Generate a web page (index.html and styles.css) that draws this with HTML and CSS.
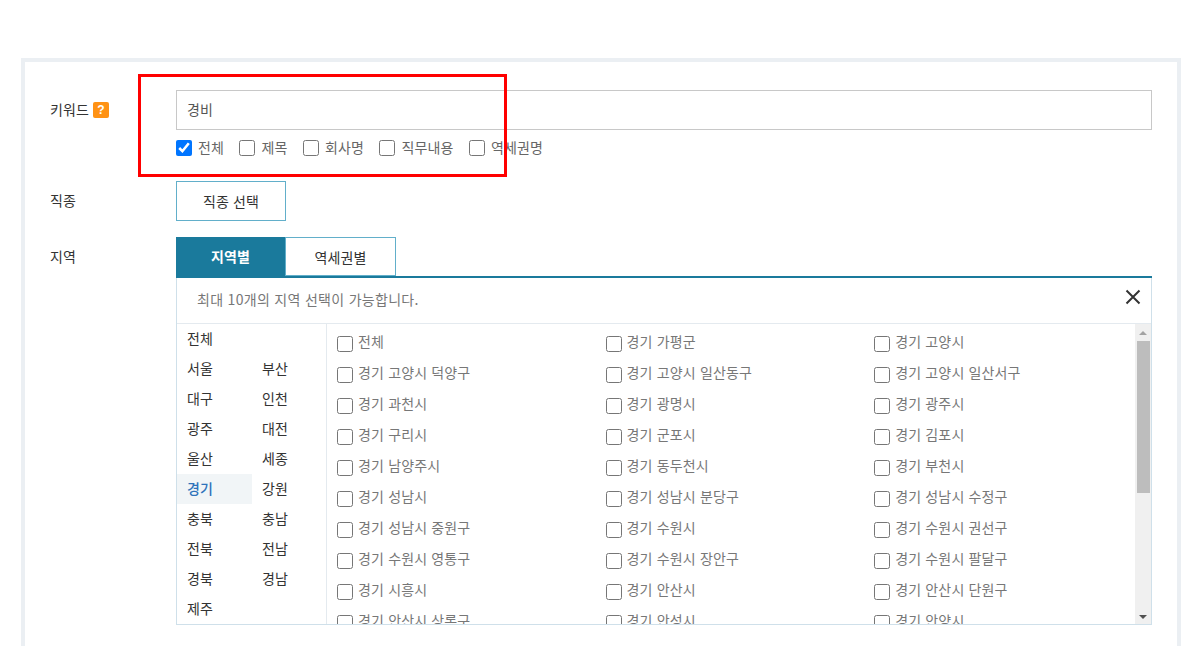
FILE: index.html
```html
<!DOCTYPE html>
<html lang="ko">
<head>
<meta charset="utf-8">
<title>검색</title>
<link rel="stylesheet" href="styles.css">
</head>
<body>
<div class="card">
  <div class="row row-keyword">
    <div class="label">키워드<span class="help">?</span></div>
    <div class="field">
      <div class="text-input">경비</div>
      <div class="checks">
        <label class="check"><input type="checkbox" checked><span>전체</span></label>
        <label class="check"><input type="checkbox"><span>제목</span></label>
        <label class="check"><input type="checkbox"><span>회사명</span></label>
        <label class="check"><input type="checkbox"><span>직무내용</span></label>
        <label class="check"><input type="checkbox"><span>역세권명</span></label>
      </div>
    </div>
  </div>
  <div class="row row-job">
    <div class="label">직종</div>
    <div class="field"><button class="job-btn">직종 선택</button></div>
  </div>
  <div class="row row-area">
    <div class="label">지역</div>
    <div class="field">
      <div class="tabs">
        <div class="tab tab-on">지역별</div>
        <div class="tab">역세권별</div>
      </div>
      <div class="panel">
        <div class="panel-head">
          <span class="notice">최대 10개의 지역 선택이 가능합니다.</span>
          <svg class="close" width="16" height="16" viewBox="0 0 16 16"><path d="M1.5 1.5 14.5 14.5M14.5 1.5 1.5 14.5" stroke="#333" stroke-width="2" fill="none"/></svg>
        </div>
        <div class="panel-body">
          <div class="regions">
            <div class="region">전체</div><div class="region"></div>
            <div class="region">서울</div><div class="region">부산</div>
            <div class="region">대구</div><div class="region">인천</div>
            <div class="region">광주</div><div class="region">대전</div>
            <div class="region">울산</div><div class="region">세종</div>
            <div class="region region-on">경기</div><div class="region">강원</div>
            <div class="region">충북</div><div class="region">충남</div>
            <div class="region">전북</div><div class="region">전남</div>
            <div class="region">경북</div><div class="region">경남</div>
            <div class="region">제주</div><div class="region"></div>
          </div>
          <div class="cities">
            <label class="city"><input type="checkbox"><span>전체</span></label>
            <label class="city"><input type="checkbox"><span>경기 가평군</span></label>
            <label class="city"><input type="checkbox"><span>경기 고양시</span></label>
            <label class="city"><input type="checkbox"><span>경기 고양시 덕양구</span></label>
            <label class="city"><input type="checkbox"><span>경기 고양시 일산동구</span></label>
            <label class="city"><input type="checkbox"><span>경기 고양시 일산서구</span></label>
            <label class="city"><input type="checkbox"><span>경기 과천시</span></label>
            <label class="city"><input type="checkbox"><span>경기 광명시</span></label>
            <label class="city"><input type="checkbox"><span>경기 광주시</span></label>
            <label class="city"><input type="checkbox"><span>경기 구리시</span></label>
            <label class="city"><input type="checkbox"><span>경기 군포시</span></label>
            <label class="city"><input type="checkbox"><span>경기 김포시</span></label>
            <label class="city"><input type="checkbox"><span>경기 남양주시</span></label>
            <label class="city"><input type="checkbox"><span>경기 동두천시</span></label>
            <label class="city"><input type="checkbox"><span>경기 부천시</span></label>
            <label class="city"><input type="checkbox"><span>경기 성남시</span></label>
            <label class="city"><input type="checkbox"><span>경기 성남시 분당구</span></label>
            <label class="city"><input type="checkbox"><span>경기 성남시 수정구</span></label>
            <label class="city"><input type="checkbox"><span>경기 성남시 중원구</span></label>
            <label class="city"><input type="checkbox"><span>경기 수원시</span></label>
            <label class="city"><input type="checkbox"><span>경기 수원시 권선구</span></label>
            <label class="city"><input type="checkbox"><span>경기 수원시 영통구</span></label>
            <label class="city"><input type="checkbox"><span>경기 수원시 장안구</span></label>
            <label class="city"><input type="checkbox"><span>경기 수원시 팔달구</span></label>
            <label class="city"><input type="checkbox"><span>경기 시흥시</span></label>
            <label class="city"><input type="checkbox"><span>경기 안산시</span></label>
            <label class="city"><input type="checkbox"><span>경기 안산시 단원구</span></label>
            <label class="city"><input type="checkbox"><span>경기 안산시 상록구</span></label>
            <label class="city"><input type="checkbox"><span>경기 안성시</span></label>
            <label class="city"><input type="checkbox"><span>경기 안양시</span></label>
          </div>
          <div class="scrollbar">
            <div class="arrow arrow-up"></div>
            <div class="thumb"></div>
            <div class="track-rest"></div>
            <div class="arrow arrow-down"></div>
          </div>
        </div>
      </div>
    </div>
  </div>
  <div class="highlight"></div>
</div>
</body>
</html>
```
FILE: styles.css
```css
* { box-sizing: border-box; }
html, body { margin: 0; height: 646px; overflow: hidden; background: #fff; }
body {
  padding: 58px 22px 0 21px;
  font-family: "Noto Sans CJK KR", "Noto Sans", sans-serif;
  font-size: 14px;
  letter-spacing: .15px;
  color: #333;
}
.card {
  position: relative;
  border: 4px solid #ebeff3;
  border-bottom: 0;
  height: 588px;
  padding: 28px 25px 0 25px;
}
.row { display: flex; }
.row-job { margin-top: 25px; }
.row-area { margin-top: 16px; }
.label { width: 126px; flex: none; line-height: 20px; padding-top: 9px; display: flex; align-items: flex-start; }
.help {
  width: 16px; height: 16px; margin: 3px 0 0 4px;
  background: #ff9214; color: #fff; border-radius: 2px;
  font: bold 12px/16px "Liberation Sans", sans-serif; text-align: center;
}
.field { flex: 1; min-width: 0; }
.text-input {
  height: 40px; border: 1px solid #c8c8c8; padding: 0 10px;
  line-height: 36px; color: #555;
}
.checks { display: flex; margin-top: 10px; height: 16px; }
.check { display: flex; align-items: center; margin-right: 15.4px; color: #666; line-height: 16px; }
.check input, .city input { width: 16px; height: 16px; margin: 0; flex: none; }
.check span { margin: 0 0 3px 6px; }
.job-btn {
  display: block; width: 110px; height: 40px; background: #fff;
  border: 1px solid #62afca; padding: 0; color: #333;
  font: inherit; letter-spacing: inherit; line-height: 38px;
}
.tabs { display: flex; height: 41px; border-bottom: 2px solid #1a7a9c; }
.tab {
  width: 110px; height: 39px; border: 1px solid #62afca; border-left: 0;
  text-align: center; line-height: 38px; color: #333;
}
.tab-on { background: #1a7a9c; color: #fff; font-weight: 700; border: 0; border-right: 1px solid #62afca; }
.panel { border: 1px solid #cfe0ea; border-top: 0; height: 347px; display: flex; flex-direction: column; }
.panel-head {
  height: 46px; flex: none; display: flex; align-items: center; justify-content: space-between;
  padding: 0 10px 0 20px; border-bottom: 1px solid #e4eaef; color: #777;
}
.notice { margin-bottom: 4px; letter-spacing: .3px; }
.close { margin-bottom: 8px; }
.panel-body { flex: 1; min-height: 0; display: flex; overflow: hidden; }
.regions {
  width: 150px; flex: none; border-right: 1px solid #e4eaef;
  display: grid; grid-template-columns: 75px 74px; grid-auto-rows: 30px; align-content: start;
}
.region { padding-left: 10px; line-height: 28px; }
.region-on { background: #f1f5f7; color: #2f73bb; font-weight: 500; }
.cities {
  flex: 1; min-width: 0; padding: 4px 0 0 10px; overflow: hidden;
  display: grid; grid-template-columns: 268.6px 268.6px 1fr; grid-auto-rows: 31px; align-content: start;
}
.city { display: flex; align-items: center; color: #777; }
.city span { margin: 0 0 6px 5px; }
.scrollbar { width: 16px; flex: none; background: #f0f0f0; display: flex; flex-direction: column; align-items: center; }
.arrow { width: 0; height: 0; flex: none; border-left: 4px solid transparent; border-right: 4px solid transparent; }
.arrow-up { border-bottom: 4px solid #a3a3a3; margin: 7px 0 6px; }
.arrow-down { border-top: 4px solid #505050; margin: 0 0 5px; }
.thumb { width: 13px; height: 152px; background: #bdbdbd; flex: none; }
.track-rest { flex: 1; }
.highlight {
  position: absolute; left: 113px; top: 12px; width: 369px; height: 103px;
  border: 3px solid #f00; pointer-events: none;
}
```
